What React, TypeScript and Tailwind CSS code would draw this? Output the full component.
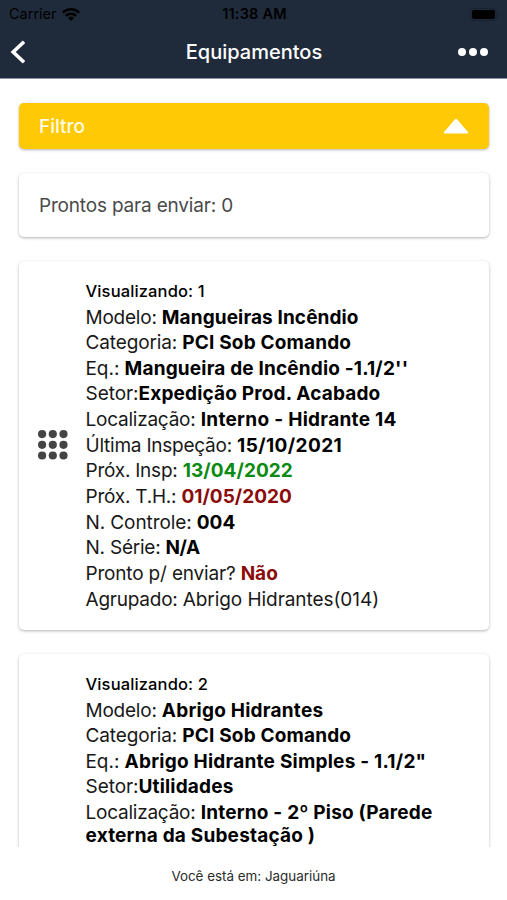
import type { ReactNode } from 'react';

interface Field {
  label: string;
  value: string;
  labelClass?: string;
  valueClass?: string;
}

interface Equipment {
  id: number;
  fields: Field[];
}

const equipments: Equipment[] = [
  {
    id: 1,
    fields: [
      { label: 'Modelo: ', value: 'Mangueiras Incêndio', valueClass: 'font-bold text-black tracking-[0.11px]' },
      { label: 'Categoria: ', value: 'PCI Sob Comando', labelClass: 'tracking-[-0.13px]' },
      { label: 'Eq.: ', value: "Mangueira de Incêndio -1.1/2''", labelClass: 'tracking-[-0.05px]' },
      { label: 'Setor:', value: 'Expedição Prod. Acabado', labelClass: 'tracking-[-0.05px]' },
      { label: 'Localização: ', value: 'Interno - Hidrante 14', valueClass: 'font-bold text-black tracking-[0.3px]' },
      { label: 'Última Inspeção: ', value: '15/10/2021', valueClass: 'font-bold text-black tracking-[0.4px]' },
      { label: 'Próx. Insp: ', value: '13/04/2022', valueClass: 'font-bold text-[#0a8a12] tracking-[0.06px]' },
      { label: 'Próx. T.H.: ', value: '01/05/2020', valueClass: 'font-bold text-[#8b0a0a] tracking-[0.02px]' },
      { label: 'N. Controle: ', value: '004', labelClass: 'tracking-[-0.1px]', valueClass: 'font-bold text-black' },
      { label: 'N. Série: ', value: 'N/A', valueClass: 'font-bold text-black tracking-[-0.5px]' },
      {
        label: 'Pronto p/ enviar? ',
        value: 'Não',
        labelClass: 'tracking-[-0.18px]',
        valueClass: 'font-bold text-[#8b0a0a]',
      },
      { label: 'Agrupado: ', value: 'Abrigo Hidrantes(014)', valueClass: 'tracking-[-0.06px]' },
    ],
  },
  {
    id: 2,
    fields: [
      { label: 'Modelo: ', value: 'Abrigo Hidrantes', valueClass: 'font-bold text-black tracking-[0.24px]' },
      { label: 'Categoria: ', value: 'PCI Sob Comando', labelClass: 'tracking-[-0.13px]' },
      {
        label: 'Eq.: ',
        value: 'Abrigo Hidrante Simples - 1.1/2"',
        labelClass: 'tracking-[-0.05px]',
        valueClass: 'font-bold text-black tracking-[0.23px]',
      },
      { label: 'Setor:', value: 'Utilidades', labelClass: 'tracking-[-0.05px]' },
      {
        label: 'Localização: ',
        value: 'Interno - 2º Piso (Parede externa da Subestação )',
        valueClass: 'font-bold text-black tracking-[0.2px]',
      },
    ],
  },
];

function Card({ children, className }: { children: ReactNode; className: string }) {
  return (
    <div className={`shrink-0 rounded-[5px] shadow-[0_1px_3px_rgba(0,0,0,0.3)] ${className}`}>
      {children}
    </div>
  );
}

function GridDots() {
  return (
    <svg viewBox="0 0 30 30" className="h-[30px] w-[30px]" fill="#444444">
      {[4.1, 14.8, 25.5].map((y) =>
        [4.1, 14.8, 25.5].map((x) => <circle key={`${x}-${y}`} cx={x} cy={y} r="4.1" />)
      )}
    </svg>
  );
}

function EquipmentCard({ equipment }: { equipment: Equipment }) {
  return (
    <Card className="flex min-h-[369px] bg-white pt-[18px] pr-5 pb-4 pl-[18.5px] last:min-h-[440px]">
      <div className="w-12 shrink-0 self-center pb-[3px]">
        <GridDots />
      </div>
      <div className="min-w-0 flex-1 text-[19px] leading-[23px] text-[#181818]">
        <p className="mb-[2.5px] pt-px text-[16.5px] leading-[23px] font-[450] tracking-[0.13px] text-black">
          Visualizando: {equipment.id}
        </p>
        {equipment.fields.map((field) => (
          <p key={field.label} className="mb-[2.67px]">
            <span className={field.labelClass ?? 'tracking-[-0.23px]'}>{field.label}</span>
            <span className={field.valueClass ?? 'font-bold tracking-[0.17px] text-black'}>{field.value}</span>
          </p>
        ))}
      </div>
    </Card>
  );
}

function StatusBar() {
  return (
    <div className="grid h-7 grid-cols-3 items-center pr-[7px] pl-[9px] text-[14.5px] text-black">
      <div className="flex items-center gap-[5px]">
        <span>Carrier</span>
        <svg viewBox="0 0 18 13" className="h-[13px] w-[18px]" fill="none" stroke="currentColor" strokeWidth="2.5">
          <path d="M0.9 4.7a11.5 11.5 0 0 1 16.2 0" />
          <path d="M3.8 7.9a7.4 7.4 0 0 1 10.4 0" />
          <path d="M9 13L6 10a4.3 4.3 0 0 1 6 0z" fill="currentColor" stroke="none" />
        </svg>
      </div>
      <span className="text-center font-semibold tracking-[0.2px]">11:38 AM</span>
      <svg viewBox="0 0 30 13" className="h-[13px] w-[30px] justify-self-end">
        <rect x="0.5" y="0.5" width="26" height="12" rx="3.5" fill="none" stroke="#18222e" />
        <rect x="2" y="2" width="23" height="9" rx="2" fill="#000" />
        <path d="M28 4.5v4a2.2 2.2 0 0 0 0-4z" fill="#18222e" />
      </svg>
    </div>
  );
}

function Header() {
  return (
    <header className="h-[79px] shrink-0 border-b border-[#8492a3] bg-[#1f2b3a]">
      <StatusBar />
      <div className="grid h-12 grid-cols-[1fr_auto_1fr] items-center pr-[9px] pl-[10px] text-white">
        <button aria-label="Voltar">
          <svg viewBox="0 0 16 24" className="h-6 w-4" fill="none" stroke="currentColor" strokeWidth="3.6">
            <path d="M14 1.8L3.2 12 14 22.2" />
          </svg>
        </button>
        <h1 className="text-[20px] font-medium">Equipamentos</h1>
        <button aria-label="Mais opções" className="mr-[10px] justify-self-end">
          <svg viewBox="0 0 30 8" className="h-2 w-[30px]" fill="currentColor">
            <circle cx="4" cy="4" r="4" />
            <circle cx="15" cy="4" r="4" />
            <circle cx="26" cy="4" r="4" />
          </svg>
        </button>
      </div>
    </header>
  );
}

export default function App() {
  return (
    <div className="flex h-[900px] w-[507px] flex-col overflow-hidden bg-white font-['Inter','Liberation_Sans',sans-serif]">
      <Header />
      <main className="flex min-h-0 flex-1 flex-col gap-6 overflow-hidden pt-6 pr-[18px] pl-[19px]">
        <Card className="flex h-[46px] items-center justify-between bg-[#ffc905] px-5">
          <span className="pt-0.5 text-[19px] font-medium text-[#fffbe6]">Filtro</span>
          <svg viewBox="0 0 26 16" className="h-4 w-[26px]" fill="#fff">
            <path d="M1.5 15.5h23q1.3-.4.4-1.5L14 1.2q-1-.9-2 0L1.1 14q-.9 1.1.4 1.5z" />
          </svg>
        </Card>
        <Card className="flex h-16 items-center bg-white pl-5">
          <span className="pt-0.5 text-[19px] tracking-[-0.18px] text-[#4a4a4a]">Prontos para enviar: 0</span>
        </Card>
        {equipments.map((equipment) => (
          <EquipmentCard key={equipment.id} equipment={equipment} />
        ))}
      </main>
      <footer className="flex h-[53px] shrink-0 items-center justify-center pt-[5px] text-[13.4px] text-[#2a2a2a]">
        Você está em: Jaguariúna
      </footer>
    </div>
  );
}
